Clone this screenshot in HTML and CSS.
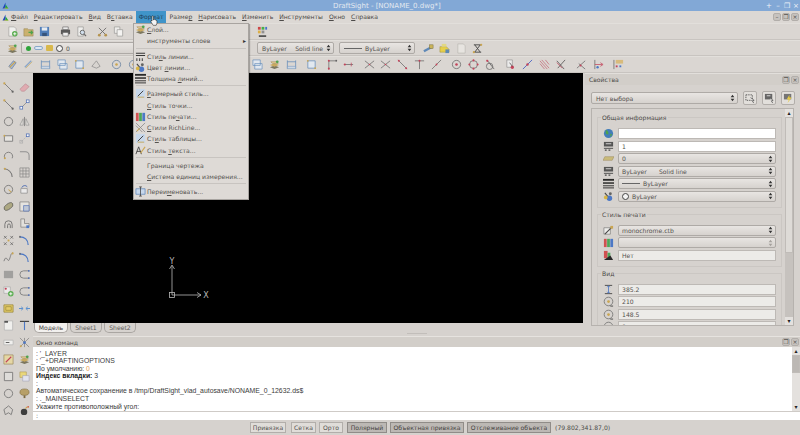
FILE: index.html
```html
<!DOCTYPE html>
<html lang="ru">
<head>
    <meta charset="UTF-8">
    <title>DraftSight - [NONAME_0.dwg*]</title>
    <link rel="stylesheet" href="styles.css">
</head>
<body>
<svg class="defs" xmlns="http://www.w3.org/2000/svg">
    <symbol id="logo" viewBox="0 0 12 12"><path d="M1 11 6 1v10z" fill="#1b3fc4"/><path d="M6 4l5 7H6z" fill="#18a83a"/><path d="M3 11h8v-1H3z" fill="#d8c020"/></symbol>
    <symbol id="new" viewBox="0 0 12 12"><path d="M2 1h6l2 2v8H2z" fill="#f4f4f2" stroke="#9a9a96" stroke-width=".7"/><circle cx="8.500" cy="8.500" r="3" fill="#49a83e"/><path d="M8.500 6.800v3.400M6.800 8.500h3.400" stroke="#fff"/></symbol>
    <symbol id="open" viewBox="0 0 12 12"><path d="M1 3h4l1 1h5v7H1z" fill="#c9ad62" stroke="#8f7a44" stroke-width=".6"/><path d="M6 7h4M8.500 5l2 2-2 2" stroke="#3d9c3a" fill="none" stroke-width="1.200"/></symbol>
    <symbol id="save" viewBox="0 0 12 12"><path d="M1 1h10v10H1z" fill="#3f73b5"/><path d="M3 1.500h6v3.500H3z" fill="#e8eef5"/><path d="M3.500 7.500h5V11h-5z" fill="#20416e"/></symbol>
    <symbol id="print" viewBox="0 0 12 12"><path d="M3 1h6v3H3z" fill="#eee" stroke="#444" stroke-width=".6"/><path d="M1 4h10v5H1z" fill="#4a4a4a"/><path d="M3 7h6v4H3z" fill="#f2f2f2" stroke="#444" stroke-width=".6"/></symbol>
    <symbol id="preview" viewBox="0 0 12 12"><path d="M2 1h6v10H2z" fill="#f2f2f0" stroke="#8a8a88" stroke-width=".7"/><circle cx="7" cy="7" r="2.400" fill="#cfe0f0" stroke="#555"/><path d="M9 9l2 2" stroke="#555" stroke-width="1.200"/></symbol>
    <symbol id="cut" viewBox="0 0 12 12"><path d="M2 2l7 7M10 2 3 9" stroke="#555" stroke-width=".9"/><circle cx="2.500" cy="10" r="1.500" fill="#b08a3c"/><circle cx="9.500" cy="10" r="1.500" fill="#b08a3c"/></symbol>
    <symbol id="copy" viewBox="0 0 12 12"><path d="M1.500 1h6v7h-6z" fill="#f0f0ee" stroke="#8a8a88" stroke-width=".7"/><path d="M4.500 4h6v7h-6z" fill="#f8f8f6" stroke="#8a8a88" stroke-width=".7"/></symbol>
    <symbol id="layer" viewBox="0 0 12 12"><path d="M1 9l5-2 5 2-5 2z" fill="#6f6a50"/><path d="M1 6.500l5-2 5 2-5 2z" fill="#c8a450"/><path d="M2 3h6l2 2H4z" fill="#e2c887" stroke="#8c7336" stroke-width=".5"/><circle cx="9" cy="3" r="1.500" fill="#3c9c3c"/></symbol>
    <symbol id="colorgrid" viewBox="0 0 12 12"><path d="M1 1h3v3H1z" fill="#c33"/><path d="M5 1h3v3H5z" fill="#3a3"/><path d="M9 1h2v3H9z" fill="#36c"/><path d="M1 5h3v3H1z" fill="#da3"/><path d="M5 5h3v3H5z" fill="#888"/><path d="M2 11h8" stroke="#222" stroke-width="1.600"/></symbol>
    <symbol id="measure" viewBox="0 0 12 12"><path d="M1 9 10 4" stroke="#4f7fb5" stroke-width="2.500"/><rect x="7" y="2" width="4" height="4" fill="#c8b04a" stroke="#665a20" stroke-width=".5"/></symbol>
    <symbol id="sheetlayer" viewBox="0 0 12 12"><path d="M1 4h7l3 3v3H1z" fill="#e8cf38" stroke="#8f8020" stroke-width=".5"/><path d="M3 1h5v3H3z" fill="#e4d978"/><path d="M7 7h4v4H7z" fill="#4c7fb0"/></symbol>
    <symbol id="page" viewBox="0 0 12 12"><path d="M2 1h6l2 2v8H2z" fill="#e9e7e2" stroke="#b5b3ae" stroke-width=".7"/></symbol>
    <symbol id="tape" viewBox="0 0 12 12"><path d="M2 2h8M2 10h8M3 2l6 8M9 2l-6 8" stroke="#333" fill="none"/><circle cx="2" cy="10" r="1.200" fill="#c9a040"/><circle cx="10" cy="2" r="1.200" fill="#c9a040"/></symbol>
    <symbol id="t-iso" viewBox="0 0 12 12"><path d="M2 8 7 2l3 2-5 7z" fill="#9db4d6" stroke="#3a5a8c" stroke-width=".6"/><path d="M3 9l6-6" stroke="#c9a040" stroke-width="1.200"/></symbol>
    <symbol id="t-dia" viewBox="0 0 12 12"><path d="M2 9 9 2" stroke="#7fa0c8" stroke-width="1.500"/><path d="M3 10 10 3" stroke="#c9a040" stroke-width=".7"/></symbol>
    <symbol id="t-lin" viewBox="0 0 12 12"><path d="M1.500 1.500v9M10.500 1.500v9M1.500 3h9" stroke="#4f7fb5" fill="none" stroke-width=".8"/><path d="M1.500 8h9v2.500h-9z" fill="#cbd8e8" stroke="#4f7fb5" stroke-width=".5"/></symbol>
    <symbol id="t-box" viewBox="0 0 12 12"><path d="M1 1h8v6H1zM3 5h8v6H3z" fill="#e4ebf4" stroke="#4f7fb5" stroke-width=".7"/></symbol>
    <symbol id="t-frame" viewBox="0 0 12 12"><path d="M2 2h8v8H2z" fill="#e4ebf4" stroke="#4f7fb5" stroke-width=".8"/><circle cx="2" cy="2" r="1" fill="#c9a040"/><circle cx="10" cy="10" r="1" fill="#c9a040"/></symbol>
    <symbol id="t-wedge" viewBox="0 0 12 12"><path d="M2 8 7 2l4 6-4 2z" fill="#d8d4d0" stroke="#777" stroke-width=".7"/></symbol>
    <symbol id="t-target" viewBox="0 0 12 12"><circle cx="6" cy="6" r="4.500" fill="none" stroke="#4f6f96" stroke-width=".8"/><circle cx="6" cy="6" r="1.400" fill="#c9a040"/></symbol>
    <symbol id="t-target-r" viewBox="0 0 12 12"><circle cx="6" cy="6" r="4.500" fill="none" stroke="#555" stroke-width=".8"/><circle cx="6" cy="6" r="1.400" fill="#c0304a"/></symbol>
    <symbol id="t-circ-r" viewBox="0 0 12 12"><circle cx="6" cy="6" r="4.300" fill="none" stroke="#555" stroke-width=".8"/><g fill="#c0304a"><circle cx="6" cy="1.500" r="1.100"/><circle cx="6" cy="10.500" r="1.100"/><circle cx="1.500" cy="6" r="1.100"/><circle cx="10.500" cy="6" r="1.100"/></g></symbol>
    <symbol id="t-tan" viewBox="0 0 12 12"><circle cx="5" cy="8" r="3.500" fill="none" stroke="#555" stroke-width=".8"/><path d="M2 1l8 10" stroke="#444" stroke-width=".8"/><circle cx="2.500" cy="2" r="1.200" fill="#c0304a"/></symbol>
    <symbol id="t-node" viewBox="0 0 12 12"><path d="M2 2v9M2 2h7" stroke="#555" fill="none" stroke-width=".8"/><circle cx="2" cy="2" r="1.100" fill="#c0304a"/><circle cx="10" cy="2" r="1.100" fill="#555"/><circle cx="2" cy="10.500" r="1.100" fill="#c0304a"/></symbol>
    <symbol id="t-dist" viewBox="0 0 12 12"><path d="M1 6h10" stroke="#555" stroke-width=".8"/><circle cx="2" cy="6" r="1.200" fill="#c0304a"/><path d="M9 4v4" stroke="#c0304a" stroke-width=".8"/></symbol>
    <symbol id="t-x" viewBox="0 0 12 12"><path d="M1 2l10 8M11 2 1 10" stroke="#555" stroke-width=".8"/><circle cx="6" cy="6" r=".9" fill="#c0304a"/></symbol>
    <symbol id="t-diag" viewBox="0 0 12 12"><path d="M1 1l10 10" stroke="#555" stroke-width=".8"/><circle cx="2" cy="2" r="1.100" fill="#c0304a"/><circle cx="10" cy="10" r="1.100" fill="#c0304a"/></symbol>
    <symbol id="t-tee" viewBox="0 0 12 12"><path d="M1 2h10M6 2v9" stroke="#555" stroke-width=".8"/><circle cx="6" cy="2" r="1.100" fill="#c0304a"/></symbol>
    <symbol id="t-rise" viewBox="0 0 12 12"><path d="M1 11 11 1" stroke="#555" stroke-width=".8"/><circle cx="6" cy="6" r="1" fill="#c0304a"/></symbol>
    <symbol id="t-snap" viewBox="0 0 12 12"><path d="M2 1h6v8H2z" fill="#eee" stroke="#777" stroke-width=".6"/><circle cx="8" cy="9" r="1.800" fill="#c0304a"/><path d="M5 4l3 4" stroke="#333" stroke-width=".8"/></symbol>
    <symbol id="t-blue" viewBox="0 0 12 12"><path d="M1 11 11 1" stroke="#3a56c4"/><circle cx="6" cy="6" r="1.300" fill="#c0304a"/></symbol>
    <symbol id="t-hatch" viewBox="0 0 12 12"><path d="M1 5l5 6M1 2l8 9M3 1l8 9M7 1l4 5" stroke="#c05a6a" stroke-width=".8"/></symbol>
    <symbol id="t-para" viewBox="0 0 12 12"><path d="M2 2l8 9M11 1 3 10" stroke="#333" stroke-width=".8"/><path d="M2 4l6 6" stroke="#c0304a" stroke-width=".8"/></symbol>
    <symbol id="t-ang" viewBox="0 0 12 12"><path d="M1 10 10 2M3 5l7 6" stroke="#555" stroke-width=".8"/><circle cx="5" cy="7" r="1.100" fill="#c0304a"/></symbol>
    <symbol id="t-perp" viewBox="0 0 12 12"><path d="M2 1v10" stroke="#555" stroke-width=".8"/><path d="M2 6h8M8 4l3 2-3 2" stroke="#c0304a" fill="none" stroke-width=".8"/><circle cx="5" cy="9" r="1.300" fill="#3a6cc4"/></symbol>
    <symbol id="t-snaps" viewBox="0 0 12 12"><path d="M1 1v10" stroke="#555" stroke-width=".8"/><path d="M3 1h8v4H3z" fill="#d8b870"/><g fill="#c0304a"><rect x="3" y="7" width="2" height="2"/></g><g fill="#3a6cc4"><rect x="7" y="7" width="2" height="2"/></g></symbol>
    <symbol id="d-line" viewBox="0 0 12 12"><path d="M1 1l10 10" stroke="#666" stroke-width=".9"/><circle cx="1.500" cy="1.500" r="1.200" fill="#c9a040"/><circle cx="10.500" cy="10.500" r="1.200" fill="#555"/></symbol>
    <symbol id="d-eraser" viewBox="0 0 12 12"><path d="M1 8 7 2l4 3-5 5H3z" fill="#e2a6ae" stroke="#b07880" stroke-width=".6"/></symbol>
    <symbol id="d-move" viewBox="0 0 12 12"><path d="M3 9l6-6" stroke="#777" stroke-width=".8"/><rect x="8" y="1" width="3" height="3" fill="#fff" stroke="#3a5fb0" stroke-width=".8"/><rect x="1" y="8" width="3" height="3" fill="#fff" stroke="#3a5fb0" stroke-width=".8"/></symbol>
    <symbol id="d-ring" viewBox="0 0 12 12"><circle cx="6" cy="6" r="4.500" fill="none" stroke="#666" stroke-width=".9"/></symbol>
    <symbol id="d-mirror" viewBox="0 0 12 12"><path d="M6 1v10" stroke="#666" stroke-width=".8"/><path d="M4.500 3v7H1zM7.500 3v7H11z" fill="#e4e2de" stroke="#888" stroke-width=".7"/></symbol>
    <symbol id="d-rect" viewBox="0 0 12 12"><path d="M1.500 3h9v6h-9z" fill="#e8e6e2" stroke="#666" stroke-width=".9"/><circle cx="1.500" cy="3" r="1" fill="#c9a040"/></symbol>
    <symbol id="d-off" viewBox="0 0 12 12"><path d="M2 10l7-7" stroke="#aaa" stroke-dasharray="1.500 1" stroke-width=".8"/><rect x="8" y="1" width="3" height="3" fill="#fff" stroke="#3a5fb0" stroke-width=".8"/><rect x="1" y="8" width="3" height="3" fill="none" stroke="#aaa" stroke-width=".8"/></symbol>
    <symbol id="d-arc" viewBox="0 0 12 12"><path d="M2 9a4.500 4.500 0 1 1 8 0" fill="none" stroke="#666" stroke-width=".9"/><circle cx="2" cy="9" r="1.100" fill="#c9a040"/></symbol>
    <symbol id="d-fillet" viewBox="0 0 12 12"><path d="M1 2h6a4 4 0 0 1 4 4v5" fill="none" stroke="#888" stroke-width="1.100"/></symbol>
    <symbol id="d-arc2" viewBox="0 0 12 12"><path d="M1 2c5 0 9 4 9 9" fill="none" stroke="#666" stroke-width="1.100"/><circle cx="2" cy="2" r="1.100" fill="#c9a040"/></symbol>
    <symbol id="d-grid" viewBox="0 0 12 12"><path d="M1 1h10v10H1zM1 4.300h10M1 7.600h10M4.300 1v10M7.600 1v10" fill="none" stroke="#777" stroke-width=".7"/></symbol>
    <symbol id="d-circ" viewBox="0 0 12 12"><circle cx="6" cy="6" r="4.500" fill="none" stroke="#666" stroke-width=".9"/><path d="M6 6l3 3" stroke="#c9a040" stroke-width="1.100"/></symbol>
    <symbol id="d-rot" viewBox="0 0 12 12"><path d="M2 5h7v5H2z" fill="#eee" stroke="#777" stroke-width=".7"/><path d="M3 4a3.500 3.500 0 0 1 6-1" stroke="#3a5fb0" fill="none"/></symbol>
    <symbol id="d-ell" viewBox="0 0 12 12"><ellipse cx="6" cy="6" rx="5.500" ry="3" transform="rotate(-35 6 6)" fill="#a8a378" stroke="#444" stroke-width=".7"/></symbol>
    <symbol id="d-scale" viewBox="0 0 12 12"><path d="M1 1h10v10H1z" fill="#e8e6e2" stroke="#777" stroke-width=".8"/><path d="M5 5h6v6H5z" fill="#bcc6d6" stroke="#3a5fb0" stroke-width=".7"/></symbol>
    <symbol id="d-spiral" viewBox="0 0 12 12"><path d="M2 11V7a4 4 0 0 1 8 0v4M5 11V8a1.500 1.500 0 0 1 3 0v3" fill="none" stroke="#666"/></symbol>
    <symbol id="d-stretch" viewBox="0 0 12 12"><path d="M2 1v9h9V6H6V1z" fill="#e4e2de" stroke="#777" stroke-width=".8"/><rect x="8" y="8" width="3" height="3" fill="#3a6cc4"/></symbol>
    <symbol id="d-pts" viewBox="0 0 12 12"><g stroke="#555" stroke-width=".8"><path d="M1 1l3 3M4 1 1 4M8 1l3 3M11 1 8 4M1 8l3 3M4 8l-3 3M8 8l3 3M11 8l-3 3"/></g><path d="M5 5h2v2H5z" fill="#c9a040"/></symbol>
    <symbol id="d-arcb" viewBox="0 0 12 12"><path d="M1 2c5 0 9 3 9 9" fill="none" stroke="#3a6cc4" stroke-width="1.300"/><path d="M1 1v2" stroke="#222"/></symbol>
    <symbol id="d-spline" viewBox="0 0 12 12"><path d="M1 10c3-9 4 3 6-2s1-6 4-7" fill="none" stroke="#666" stroke-width=".9"/><circle cx="10.500" cy="1.500" r="1.100" fill="#c9a040"/></symbol>
    <symbol id="d-fill" viewBox="0 0 12 12"><path d="M1 2h10v8H1z" fill="#9a9a98"/></symbol>
    <symbol id="d-round" viewBox="0 0 12 12"><path d="M11 2H5a3.500 3.500 0 0 0 0 8h6" fill="none" stroke="#777"/><path d="M10 1h1.500v2H10zM10 9h1.500v2H10z" fill="#3a5fb0"/></symbol>
    <symbol id="d-add" viewBox="0 0 12 12"><path d="M1 1h7v7H1z" fill="#eee" stroke="#999" stroke-width=".6"/><circle cx="3" cy="3" r="1.200" fill="#c0304a"/><circle cx="8.500" cy="8.500" r="3" fill="#49a83e"/><path d="M8.500 6.800v3.400M6.800 8.500h3.400" stroke="#fff"/></symbol>
    <symbol id="d-yrect" viewBox="0 0 12 12"><path d="M1 2h10v8H1z" fill="#e6cb5a" stroke="#8f7a24" stroke-width=".8"/><path d="M3 4h6v4H3z" fill="none" stroke="#8f7a24" stroke-width=".7"/></symbol>
    <symbol id="d-arrows" viewBox="0 0 12 12"><path d="M0 6h4M2.500 4.200 4.500 6l-2 1.800M12 6H8M9.500 4.200 7.500 6l2 1.800" stroke="#3a7fd0" fill="none"/></symbol>
    <symbol id="d-wpage" viewBox="0 0 12 12"><path d="M1.500 1h9v10h-9z" fill="#f4f4f2" stroke="#aaa" stroke-width=".7"/><path d="M1.500 1h4v2h-4z" fill="#444"/></symbol>
    <symbol id="d-tee" viewBox="0 0 12 12"><path d="M1 1.500h10" stroke="#222" stroke-width="1.200"/><path d="M6 2v9" stroke="#3a6cc4" stroke-width="1.200"/></symbol>
    <symbol id="d-tag" viewBox="0 0 12 12"><path d="M1 3.500h10v5H1z" fill="#f4f4f2" stroke="#aaa" stroke-width=".7"/><path d="M3 6h4" stroke="#444"/></symbol>
    <symbol id="d-expl" viewBox="0 0 12 12"><path d="M1 1l10 10M11 1 1 11M6 1v10" stroke="#777" stroke-width=".8"/><circle cx="6" cy="6" r="1.500" fill="#3a6cc4"/><circle cx="2" cy="10" r="1.100" fill="#c9a040"/></symbol>
    <symbol id="d-pencil" viewBox="0 0 12 12"><path d="M1 1h10v10H1z" fill="#e8d8a0" stroke="#8f7a44" stroke-width=".7"/><path d="M3 9l6-6" stroke="#c0304a" stroke-width="1.200"/></symbol>
    <symbol id="d-outline" viewBox="0 0 12 12"><path d="M1.500 1.500h9v9h-9z" fill="#e0dedb" stroke="#666" stroke-width=".9"/></symbol>
    <symbol id="d-ycopy" viewBox="0 0 12 12"><path d="M1 1h7v6H1z" fill="#ecd870" stroke="#a89040" stroke-width=".6"/><path d="M4 5h7v6H4z" fill="#e4e6f2" stroke="#9a9ab0" stroke-width=".6"/></symbol>
    <symbol id="d-tree" viewBox="0 0 12 12"><ellipse cx="6" cy="4.500" rx="5" ry="3.500" fill="#b39a5a" stroke="#6f5c2c" stroke-width=".6"/><path d="M5 8h2v3H5z" fill="#6f5c2c"/></symbol>
    <symbol id="d-star" viewBox="0 0 12 12"><path d="M6 1l4.500 4-1.500 5.500-3-2-3.500 2L1 5z" fill="none" stroke="#666" stroke-width=".9"/></symbol>
    <symbol id="d-bomb" viewBox="0 0 12 12"><circle cx="5.500" cy="7.500" r="3.500" fill="#2a2a2a"/><path d="M7 4l2-2" stroke="#c9a040" stroke-width="1.200"/><circle cx="10" cy="2" r="1" fill="#d05030"/></symbol>
    <symbol id="m-style" viewBox="0 0 12 12"><path d="M1 2.500h10M1 5h10" stroke="#222" stroke-width="1.100"/><path d="M2 8v3M5 8v3M8 8v3" stroke="#444" stroke-width="1.300"/></symbol>
    <symbol id="m-color" viewBox="0 0 12 12"><path d="M2 2l5 6" stroke="#333" stroke-width="1.200"/><circle cx="7" cy="8" r="3" fill="#3a6cc4"/><circle cx="3" cy="7" r="2" fill="#d8b030"/><circle cx="8" cy="3" r="1.600" fill="#555"/></symbol>
    <symbol id="m-weight" viewBox="0 0 12 12"><path d="M0 2h12" stroke="#111" stroke-width="2"/><path d="M0 5.500h12" stroke="#111" stroke-width="1.600"/><path d="M0 8.500h12M0 10.800h12" stroke="#111"/></symbol>
    <symbol id="m-dim" viewBox="0 0 12 12"><path d="M1 1h10v10H1z" fill="#c6d8ee"/><path d="M3 9l6-6" stroke="#222"/><path d="M3 10h7" stroke="#c9a040"/></symbol>
    <symbol id="m-print" viewBox="0 0 12 12"><path d="M1 2h3v9H1z" fill="#d04040"/><path d="M4.500 2h3v9h-3z" fill="#3aa04a"/><path d="M8 2h3v9H8z" fill="#3a6cc4"/></symbol>
    <symbol id="m-rich" viewBox="0 0 12 12"><path d="M1 1l10 10M11 1 1 11M1 4l7 7" stroke="#777" stroke-width=".8"/><path d="M2 10l3-3" stroke="#c9a040" stroke-width="1.100"/></symbol>
    <symbol id="m-text" viewBox="0 0 12 12"><path d="M1 10 4 2l3 8M2 7h4" stroke="#222" fill="none" stroke-width=".9"/><path d="M6 9l5-7" stroke="#c9a040" stroke-width="1.200"/></symbol>
    <symbol id="m-rename" viewBox="0 0 12 12"><path d="M1 3h10v6H1z" fill="#c6d8ee" stroke="#3a6cb0" stroke-width=".7"/><path d="M6 1v10M4.500 1h3M4.500 11h3" stroke="#222" stroke-width=".8"/></symbol>
    <symbol id="p-globe" viewBox="0 0 12 12"><circle cx="6" cy="6" r="5" fill="#2f72b8"/><path d="M3 2c2 1 3 2 3 4S4 7 3 6zM8 6l2 1-2 3z" fill="#3c9c3c"/></symbol>
    <symbol id="p-link" viewBox="0 0 12 12"><path d="M1 1h10v5H1z" fill="#444"/><path d="M3 3h6" stroke="#ddd"/><path d="M1 8h10" stroke="#333"/><path d="M2 10h2M6 10h2" stroke="#333" stroke-width="1.400"/></symbol>
    <symbol id="p-layer" viewBox="0 0 12 12"><path d="M0 8l2-4h10l-2 4z" fill="#c8b870" stroke="#8f7a44" stroke-width=".5"/></symbol>
    <symbol id="p-pstyle" viewBox="0 0 12 12"><path d="M1 3h7v7H1z" fill="#f0f0ee" stroke="#555" stroke-width=".6"/><path d="M2 10 10 2" stroke="#333" stroke-width="1.200"/><path d="M8 1h3v3H8z" fill="#c9a040"/></symbol>
    <symbol id="p-net" viewBox="0 0 12 12"><path d="M1 1h4v8H1z" fill="#d04040"/><path d="M5 3h3v7H5z" fill="#3aa04a"/><path d="M1 11h10L8 6z" fill="#111"/></symbol>
    <symbol id="p-height" viewBox="0 0 12 12"><path d="M2 1.500h8M2 10.500h8" stroke="#222" stroke-width=".9"/><path d="M6 2v8M4.500 3.500 6 2l1.500 1.500M4.500 8.500 6 10l1.500-1.500" stroke="#3a6cc4" fill="none" stroke-width=".9"/></symbol>
    <symbol id="p-center" viewBox="0 0 12 12"><circle cx="6" cy="6" r="4.700" fill="none" stroke="#666" stroke-width=".9"/><circle cx="6" cy="6" r="1.500" fill="#c9a040"/><path d="M8 11h3" stroke="#333"/></symbol>
    <symbol id="sel1" viewBox="0 0 12 12"><path d="M1 2h7v6H1z" fill="none" stroke="#444" stroke-dasharray="1.500 1"/><path d="M6 5l4 3-2 .5 1.500 2.500" fill="#fff" stroke="#222" stroke-width=".7"/></symbol>
    <symbol id="sel2" viewBox="0 0 12 12"><path d="M1 1h8v6H1z" fill="#555"/><path d="M3 3h4" stroke="#ddd"/><path d="M6 5l4 3-2 .5 1.500 2.500" fill="#fff" stroke="#222" stroke-width=".7"/></symbol>
    <symbol id="sel3" viewBox="0 0 12 12"><path d="M1 1h8v6H1z" fill="#666"/><path d="M7 2 4 7h2.500L5 11l4.500-6H7z" fill="#e8c830"/></symbol>
    <symbol id="spin" viewBox="0 0 6 10"><path d="M3 1 5.300 4H.7zM3 9 .7 6h4.600z" fill="currentColor"/></symbol>
</svg>

<div class="app">
    <div class="titlebar">
        <svg class="logo"><use href="#logo"/></svg>
        <span class="title-text">DraftSight - [NONAME_0.dwg*]</span>
        <div class="wm-buttons"><span>+</span><span>–</span><span>❐</span><span>×</span></div>
    </div>

    <div class="menubar">
        <svg class="logo"><use href="#logo"/></svg>
        <span class="mi mi-first"><u>Ф</u>айл</span>
        <span class="mi"><u>Р</u>едактировать</span>
        <span class="mi"><u>В</u>ид</span>
        <span class="mi">В<u>с</u>тавка</span>
        <span class="mi mi-active">Фор<u>м</u>ат</span>
        <span class="mi">Разме<u>р</u></span>
        <span class="mi"><u>Н</u>арисовать</span>
        <span class="mi"><u>И</u>зменить</span>
        <span class="mi"><u>И</u>нструменты</span>
        <span class="mi"><u>О</u>кно</span>
        <span class="mi"><u>С</u>правка</span>
        <div class="mdi-buttons"><span>–</span><span>❐</span><span>×</span></div>
    </div>

    <div class="toolbar tb-one">
        <svg class="ic"><use href="#new"/></svg>
        <svg class="ic"><use href="#open"/></svg>
        <svg class="ic"><use href="#save"/></svg>
        <svg class="ic sep"><use href="#print"/></svg>
        <svg class="ic"><use href="#preview"/></svg>
        <svg class="ic sep"><use href="#cut"/></svg>
        <svg class="ic"><use href="#copy"/></svg>
        <svg class="ic tb-color"><use href="#colorgrid"/></svg>
    </div>

    <div class="toolbar tb-two">
        <svg class="ic"><use href="#layer"/></svg>
        <div class="combo combo-layer">
            <span class="dot"></span><span class="pill"></span><span class="lock"></span><span class="ring"></span><span>0</span>
        </div>
        <div class="combo combo-line"><span class="grow">ByLayer</span><span>Solid line</span><svg class="spin"><use href="#spin"/></svg></div>
        <div class="combo combo-weight"><span class="dash"></span><span class="grow">ByLayer</span><svg class="spin"><use href="#spin"/></svg></div>
        <div class="tb-end">
            <svg class="ic"><use href="#measure"/></svg>
            <svg class="ic"><use href="#sheetlayer"/></svg>
            <svg class="ic"><use href="#page"/></svg>
            <svg class="ic"><use href="#tape"/></svg>
        </div>
    </div>

    <div class="toolbar tb-three">
        <svg class="ic"><use href="#t-iso"/></svg>
        <svg class="ic"><use href="#t-dia"/></svg>
        <svg class="ic"><use href="#t-lin"/></svg>
        <svg class="ic"><use href="#t-box"/></svg>
        <svg class="ic"><use href="#t-frame"/></svg>
        <svg class="ic"><use href="#t-wedge"/></svg>
        <svg class="ic sep"><use href="#t-target"/></svg>
        <svg class="ic"><use href="#t-target"/></svg>
        <svg class="ic tb-after-menu"><use href="#t-box"/></svg>
        <svg class="ic"><use href="#layer"/></svg>
        <svg class="ic"><use href="#t-lin"/></svg>
        <svg class="ic sep"><use href="#t-frame"/></svg>
        <svg class="ic sep"><use href="#t-node"/></svg>
        <svg class="ic"><use href="#t-dist"/></svg>
        <svg class="ic sep"><use href="#t-x"/></svg>
        <svg class="ic"><use href="#t-x"/></svg>
        <svg class="ic"><use href="#t-diag"/></svg>
        <svg class="ic"><use href="#t-tee"/></svg>
        <svg class="ic"><use href="#t-rise"/></svg>
        <svg class="ic sep"><use href="#t-target-r"/></svg>
        <svg class="ic"><use href="#t-circ-r"/></svg>
        <svg class="ic"><use href="#t-tan"/></svg>
        <svg class="ic sep"><use href="#t-snap"/></svg>
        <svg class="ic"><use href="#t-blue"/></svg>
        <svg class="ic"><use href="#t-hatch"/></svg>
        <svg class="ic"><use href="#t-para"/></svg>
        <svg class="ic sep"><use href="#t-ang"/></svg>
        <svg class="ic"><use href="#t-perp"/></svg>
        <svg class="ic sep"><use href="#t-snaps"/></svg>
    </div>

    <div class="workspace">
        <div class="dock-left">
            <svg class="ic"><use href="#d-line"/></svg><svg class="ic"><use href="#d-eraser"/></svg>
            <svg class="ic"><use href="#d-line"/></svg><svg class="ic"><use href="#d-move"/></svg>
            <svg class="ic"><use href="#d-ring"/></svg><svg class="ic"><use href="#d-mirror"/></svg>
            <svg class="ic"><use href="#d-rect"/></svg><svg class="ic"><use href="#d-off"/></svg>
            <svg class="ic"><use href="#d-arc"/></svg><svg class="ic"><use href="#d-fillet"/></svg>
            <svg class="ic"><use href="#d-arc2"/></svg><svg class="ic"><use href="#d-grid"/></svg>
            <svg class="ic"><use href="#d-circ"/></svg><svg class="ic"><use href="#d-rot"/></svg>
            <svg class="ic"><use href="#d-ell"/></svg><svg class="ic"><use href="#d-scale"/></svg>
            <svg class="ic"><use href="#d-spiral"/></svg><svg class="ic"><use href="#d-stretch"/></svg>
            <svg class="ic"><use href="#d-pts"/></svg><svg class="ic"><use href="#d-arcb"/></svg>
            <svg class="ic"><use href="#d-spline"/></svg><svg class="ic"><use href="#d-arcb"/></svg>
            <svg class="ic"><use href="#d-fill"/></svg><svg class="ic"><use href="#d-round"/></svg>
            <svg class="ic"><use href="#d-add"/></svg><svg class="ic"><use href="#d-round"/></svg>
            <svg class="ic"><use href="#d-yrect"/></svg><svg class="ic"><use href="#d-arrows"/></svg>
            <svg class="ic"><use href="#d-wpage"/></svg><svg class="ic"><use href="#d-tee"/></svg>
            <svg class="ic"><use href="#d-tag"/></svg><svg class="ic"><use href="#d-expl"/></svg>
            <svg class="ic"><use href="#d-pencil"/></svg><svg class="ic"><use href="#layer"/></svg>
            <svg class="ic"><use href="#d-outline"/></svg><svg class="ic"><use href="#d-ycopy"/></svg>
            <svg class="ic"><use href="#d-ring"/></svg><svg class="ic"><use href="#d-tree"/></svg>
            <svg class="ic"><use href="#d-star"/></svg><svg class="ic"><use href="#d-bomb"/></svg>
        </div>

        <div class="center">
            <div class="upper">
                <div class="drawing">
                    <div class="canvas">
                        <svg class="axes" viewBox="0 0 50 50">
                            <path d="M10 38V9M7.500 12 10 8l2.500 4M10 38h29M35 35.500l4 2.500-4 2.500" fill="none" stroke="#b8b8b8" stroke-width=".8"/>
                            <rect x="7.500" y="35.500" width="5" height="5" fill="none" stroke="#b8b8b8" stroke-width=".8"/>
                            <text x="10" y="7" class="axis-label">Y</text>
                            <text x="44" y="41" class="axis-label">X</text>
                        </svg>
                    </div>
                    <div class="tabs">
                        <span class="tab tab-active">Модель</span>
                        <span class="tab">Sheet1</span>
                        <span class="tab">Sheet2</span>
                    </div>
                </div>

                <div class="props">
                    <div class="dock-head">
                        <span>Свойства</span>
                        <div class="dock-buttons"><span>❐</span><span>×</span></div>
                    </div>
                    <div class="select-row">
                        <div class="combo combo-sel"><span class="grow">Нет выбора</span><svg class="spin"><use href="#spin"/></svg></div>
                        <span class="sel-btn"><svg class="ic"><use href="#sel1"/></svg></span>
                        <span class="sel-btn"><svg class="ic"><use href="#sel2"/></svg></span>
                        <span class="sel-btn"><svg class="ic"><use href="#sel3"/></svg></span>
                    </div>
                    <div class="props-frame">
                        <div class="props-scroll">
                            <fieldset class="group">
                                <legend>Общая информация</legend>
                                <div class="rows">
                                    <svg class="ic"><use href="#p-globe"/></svg><div class="field field-white"></div>
                                    <svg class="ic"><use href="#p-link"/></svg><div class="field field-white">1</div>
                                    <svg class="ic"><use href="#p-layer"/></svg><div class="combo combo-row"><span class="grow">0</span><svg class="spin"><use href="#spin"/></svg></div>
                                    <svg class="ic"><use href="#p-link"/></svg><div class="combo combo-row"><span class="row-name">ByLayer</span><span class="grow">Solid line</span><svg class="spin"><use href="#spin"/></svg></div>
                                    <svg class="ic"><use href="#m-weight"/></svg><div class="combo combo-row"><span class="dash"></span><span class="grow">ByLayer</span><svg class="spin"><use href="#spin"/></svg></div>
                                    <svg class="ic"><use href="#m-color"/></svg><div class="combo combo-row"><span class="ring"></span><span class="grow">ByLayer</span><svg class="spin"><use href="#spin"/></svg></div>
                                </div>
                            </fieldset>
                            <fieldset class="group">
                                <legend>Стиль печати</legend>
                                <div class="rows">
                                    <svg class="ic"><use href="#p-pstyle"/></svg><div class="combo combo-row"><span class="grow">monochrome.ctb</span><svg class="spin"><use href="#spin"/></svg></div>
                                    <svg class="ic"><use href="#m-print"/></svg><div class="combo combo-row combo-off"><span class="grow"></span><svg class="spin"><use href="#spin"/></svg></div>
                                    <svg class="ic"><use href="#p-net"/></svg><div class="field">Нет</div>
                                </div>
                            </fieldset>
                            <fieldset class="group">
                                <legend>Вид</legend>
                                <div class="rows">
                                    <svg class="ic"><use href="#p-height"/></svg><div class="field">385.2</div>
                                    <svg class="ic"><use href="#p-center"/></svg><div class="field">210</div>
                                    <svg class="ic"><use href="#p-center"/></svg><div class="field">148.5</div>
                                    <svg class="ic"><use href="#p-center"/></svg><div class="field">0</div>
                                </div>
                            </fieldset>
                        </div>
                        <div class="vscroll vscroll-props">
                            <span class="arrow">▴</span><span class="thumb"></span><span class="trough"></span><span class="arrow">▾</span>
                        </div>
                    </div>
                </div>
            </div>

            <div class="splitter"><span class="grip"></span></div>

            <div class="command">
                <div class="dock-head cmd-head">
                    <span>Окно команд</span>
                    <div class="dock-buttons"><span>❐</span><span>×</span></div>
                </div>
                <div class="cmd-body">
                    <div class="cmd-log">
                        <div>: '_LAYER</div>
                        <div>: '_+DRAFTINGOPTIONS</div>
                        <div>По умолчанию: <span class="cmd-val">0</span></div>
                        <div><b>Индекс вкладки:</b> 3</div>
                        <div>:</div>
                        <div>Автоматическое сохранение в /tmp/DraftSight_vlad_autosave/NONAME_0_12632.ds$</div>
                        <div>: ._MAINSELECT</div>
                        <div>Укажите противоположный угол:</div>
                    </div>
                    <div class="vscroll vscroll-cmd">
                        <span class="arrow">▴</span><span class="thumb"></span><span class="trough trough-light"></span><span class="arrow">▾</span>
                    </div>
                </div>
                <div class="cmd-input">:</div>
                <div class="statusbar">
                    <span class="st st-snapto">Привязка</span>
                    <span class="st st-grid">Сетка</span>
                    <span class="st st-orto">Орто</span>
                    <span class="st st-on st-polar">Полярный</span>
                    <span class="st st-on st-osnap">Объектная привязка</span>
                    <span class="st st-on st-track">Отслеживание объекта</span>
                    <span class="coords">(79.802,341.87,0)</span>
                </div>
            </div>
        </div>
    </div>

    <div class="menu">
        <div class="menu-item"><svg class="ic"><use href="#layer"/></svg><span><u>С</u>лой...</span></div>
        <div class="menu-item menu-sub"><i></i><span>инструменты слоев</span><b>▸</b></div>
        <div class="menu-sep"></div>
        <div class="menu-item"><svg class="ic"><use href="#m-style"/></svg><span>Сти<u>л</u>ь линии...</span></div>
        <div class="menu-item"><svg class="ic"><use href="#m-color"/></svg><span>Цвет <u>л</u>инии...</span></div>
        <div class="menu-item"><svg class="ic"><use href="#m-weight"/></svg><span>Толщина <u>л</u>иний...</span></div>
        <div class="menu-sep"></div>
        <div class="menu-item"><svg class="ic"><use href="#m-dim"/></svg><span><u>Р</u>азмерный стиль...</span></div>
        <div class="menu-item"><i></i><span><u>С</u>тиль точки...</span></div>
        <div class="menu-item"><svg class="ic"><use href="#m-print"/></svg><span>Стиль пе<u>ч</u>ати...</span></div>
        <div class="menu-item"><svg class="ic"><use href="#m-rich"/></svg><span><u>С</u>тили RichLine...</span></div>
        <div class="menu-item"><svg class="ic"><use href="#m-dim"/></svg><span>Ст<u>и</u>ль таблицы...</span></div>
        <div class="menu-item"><svg class="ic"><use href="#m-text"/></svg><span>Стиль <u>т</u>екста...</span></div>
        <div class="menu-sep"></div>
        <div class="menu-item"><i></i><span>Граница чертежа</span></div>
        <div class="menu-item"><i></i><span><u>С</u>истема единиц измерения...</span></div>
        <div class="menu-sep"></div>
        <div class="menu-item"><svg class="ic"><use href="#m-rename"/></svg><span>Переи<u>м</u>еновать...</span></div>
    </div>

    <svg class="cursor" viewBox="0 0 10 13"><path d="M2.500 1.500c0-1.200 1.800-1.200 1.800 0V6l.5-1c1-.4 1.400.2 1.400.7.700-.4 1.300 0 1.300.6.700-.2 1.200.2 1.200.9V10l-1 2.500H4L1 8c-.6-1 .6-1.700 1.500-.8z" fill="#f4f4f4" stroke="#222" stroke-width=".7"/></svg>
</div>
</body>
</html>
```

FILE: styles.css
```css
* {
    box-sizing: border-box;
}

body {
    margin: 0;
    background: #d6d2ce;
    font-family: "DejaVu Sans", sans-serif;
    font-size: 6.1px;
    color: #4c4a48;
}

.defs {
    display: none;
}

.app {
    position: relative;
    width: 800px;
    height: 435px;
    display: flex;
    flex-direction: column;
    overflow: hidden;
    background: #d6d2ce;
}

.ic {
    width: 11px;
    height: 11px;
    flex: none;
    display: block;
    opacity: 0.88;
}

.grow {
    flex: 1;
}

/* title and menu */
.titlebar {
    height: 11px;
    flex: none;
    background: #82a8d6;
    display: flex;
    align-items: center;
    padding-left: 2px;
    font-size: 7px;
    color: #e2e8f0;
}

.logo {
    width: 7px;
    height: 7px;
    flex: none;
}

.title-text {
    margin-left: 324px;
}

.wm-buttons {
    margin-left: auto;
    display: flex;
    gap: 3px;
    padding-right: 1px;
    color: #f0f3f8;
    font-size: 7px;
}

.wm-buttons span {
    width: 6px;
    text-align: center;
}

.menubar {
    height: 12px;
    flex: none;
    display: flex;
    align-items: center;
    padding-left: 2px;
    background: #dcd8d4;
}

.mi {
    height: 100%;
    line-height: 12px;
    padding: 0 3px;
}

.mi-first {
    margin-left: -1px;
}

.mi-active {
    background: #3f94c9;
    color: #1f3f58;
}

.mdi-buttons {
    margin-left: auto;
    display: flex;
    gap: 1px;
    padding-right: 1px;
}

.mdi-buttons span,
.dock-buttons span {
    width: 8px;
    height: 8px;
    border: 1px solid #b2aeaa;
    border-radius: 2px;
    background: #c6c2be;
    font-size: 6px;
    line-height: 6px;
    text-align: center;
    color: #55524f;
}

.toolbar {
    flex: none;
    display: flex;
    align-items: center;
    padding-left: 7px;
    border-top: 1px solid #e2dfdb;
    border-bottom: 1px solid #c8c4c0;
    background: #dad6d2;
}

.tb-one {
    height: 17px;
    gap: 5px;
}

.tb-one .sep {
    margin-left: 5px;
}

.tb-color {
    margin-left: 128px;
}

.tb-two {
    height: 16px;
}

.tb-three {
    height: 17px;
    gap: 5.800px;
    padding-left: 6.500px;
}

.tb-three .sep {
    margin-left: 3.500px;
}

.tb-three .tb-after-menu {
    margin-left: 108px;
}

.combo {
    height: 12px;
    display: flex;
    align-items: center;
    gap: 3px;
    padding: 0 2px 0 4px;
    border: 1px solid #aeaaa6;
    border-radius: 2px;
    background: linear-gradient(180deg, #e8e5e2, #d6d2ce);
    white-space: nowrap;
    color: #55524f;
}

.spin {
    width: 5px;
    height: 8px;
    flex: none;
    color: #333;
}

.combo-layer {
    width: 226px;
    margin-left: 3px;
}

.combo-line {
    width: 77px;
    margin-left: 10px;
}

.combo-weight {
    width: 76px;
    margin-left: 5px;
}

.tb-end {
    display: flex;
    gap: 5.300px;
    margin-left: 8px;
}

.dot {
    width: 5px;
    height: 5px;
    border-radius: 50%;
    background: #2fa43a;
}

.pill {
    width: 9px;
    height: 4px;
    border-radius: 2px;
    background: #dbe8f4;
    border: 1px solid #8aa8c8;
}

.lock {
    width: 7px;
    height: 6px;
    border-radius: 1px;
    background: #d8b84c;
}

.ring {
    width: 7px;
    height: 7px;
    flex: none;
    border-radius: 50%;
    border: 1px solid #444;
    background: #f4f4f4;
}

.dash {
    width: 18px;
    flex: none;
    border-top: 1px solid #666;
}

/* workspace */
.workspace {
    flex: 1;
    display: flex;
    min-height: 0;
}

.dock-left {
    width: 33px;
    flex: none;
    display: grid;
    grid-template-columns: 16px 16px;
    grid-auto-rows: 17px;
    align-content: start;
    justify-items: center;
    align-items: center;
    padding-top: 5.500px;
}

.center {
    flex: 1;
    min-width: 0;
    display: flex;
    flex-direction: column;
}

.upper {
    height: 260px;
    flex: none;
    display: flex;
}

.drawing {
    width: 550px;
    flex: none;
    display: flex;
    flex-direction: column;
}

.canvas {
    position: relative;
    height: 250px;
    flex: none;
    background: #000;
}

.axes {
    position: absolute;
    left: 129px;
    top: 184px;
    width: 50px;
    height: 50px;
}

.axis-label {
    font-size: 8px;
    fill: #b8b8b8;
    text-anchor: middle;
}

.tabs {
    height: 10px;
    flex: none;
    display: flex;
    gap: 2px;
    padding-left: 1px;
}

.tab {
    width: 32px;
    height: 10px;
    line-height: 9px;
    text-align: center;
    border: 1px solid #aaa6a2;
    border-top: none;
    border-radius: 0 0 5px 5px;
    color: #5c5956;
}

.tab-active {
    width: 34px;
    background: #f2f0ee;
    color: #44423f;
}

.props {
    margin-left: 2px;
    flex: 1;
    min-width: 0;
    display: flex;
    flex-direction: column;
}

.dock-head {
    height: 12px;
    flex: none;
    display: flex;
    align-items: center;
    padding: 0 1px 0 4px;
    background: #d2cec9;
    border-top: 1px solid #e2dfdb;
}

.dock-buttons {
    margin-left: auto;
    display: flex;
    gap: 1px;
}

.select-row {
    height: 23px;
    flex: none;
    display: flex;
    align-items: center;
    padding: 3px 5px 0 6px;
}

.combo-sel {
    width: 147px;
    margin-right: 5px;
}

.sel-btn {
    width: 14px;
    height: 14px;
    margin-right: 5px;
    display: flex;
    align-items: center;
    justify-content: center;
    border: 1px solid #b2aeaa;
    border-radius: 2px;
    background: #e2dfdb;
}

.sel-btn:last-child {
    margin-right: 0;
}

.props-frame {
    height: 218px;
    flex: none;
    margin: 0 6px;
    display: flex;
    border: 1px solid #b6b2ae;
    overflow: hidden;
}

.props-scroll {
    flex: 1;
    min-width: 0;
    padding: 4px 3px 0 5px;
    overflow: hidden;
}

.group {
    margin: 0 0 2px;
    padding: 6px 5px 5px 0;
    border: 1px solid #cbc7c3;
    min-width: 0;
}

.group legend {
    margin-left: 3px;
    padding: 0 1px;
    line-height: 9px;
}

.rows {
    display: grid;
    grid-template-columns: 20px 1fr;
    row-gap: 1.500px;
    align-items: center;
    justify-items: center;
}

.rows .field,
.rows .combo {
    justify-self: stretch;
}

.field {
    height: 11px;
    line-height: 9px;
    padding: 0 3px;
    border: 1px solid #bdb9b5;
    background: #ecebe8;
    color: #55524f;
}

.field-white {
    background: #fff;
}

.combo-row {
    height: 11px;
    padding-left: 3px;
}

.row-name {
    width: 34px;
}

.combo-off .spin {
    color: #a5a19d;
}

.vscroll {
    width: 8px;
    flex: none;
    display: flex;
    flex-direction: column;
    background: #c6c2be;
}

.arrow {
    height: 8px;
    flex: none;
    background: #e4e1de;
    font-size: 6px;
    line-height: 8px;
    text-align: center;
    color: #222;
}

.thumb {
    flex: none;
    background: #dedbd7;
    border: 1px solid #c0bcb8;
}

.trough {
    flex: 1;
}

.vscroll-props .thumb {
    height: 136px;
}

.vscroll-cmd {
    background: #e4e1de;
}

.vscroll-cmd .thumb {
    height: 18px;
    background: #bcb8b4;
}

.trough-light {
    background: #e4e1de;
}

.splitter {
    height: 3px;
    flex: none;
    display: flex;
    justify-content: center;
}

.grip {
    width: 20px;
    height: 1px;
    background: #c2beba;
}

.command {
    flex: 1;
    min-height: 0;
    display: flex;
    flex-direction: column;
}

.cmd-head {
    height: 11px;
    padding-left: 3px;
    border-top: 1px solid #e6e3df;
}

.cmd-body {
    height: 65px;
    flex: none;
    display: flex;
    background: #fff;
    border-bottom: 1px solid #cfcbc7;
}

.cmd-log {
    flex: 1;
    padding: 2.500px 0 0 3px;
    overflow: hidden;
    font-family: "Liberation Sans", sans-serif;
    font-size: 6.850px;
    line-height: 7.600px;
    color: #3a3a3a;
}

.cmd-log b {
    color: #1c1c1c;
}

.cmd-val {
    color: #e8a050;
}

.cmd-input {
    height: 8px;
    flex: none;
    padding-left: 3px;
    line-height: 7px;
    background: #fff;
}

.statusbar {
    flex: 1;
    display: flex;
    align-items: center;
    padding-left: 217px;
}

.st {
    height: 11px;
    line-height: 9px;
    text-align: center;
    border: 1px solid #b2aeaa;
    background: #e0ddd9;
    white-space: nowrap;
    color: #55524f;
}

.st-snapto {
    width: 36px;
    margin-right: 5px;
}

.st-grid {
    width: 25px;
    margin-right: 3px;
}

.st-orto {
    width: 24px;
    margin-right: 4px;
}

.st-on {
    background: #bcb8b4;
    border-color: #908c88;
    margin-right: 3px;
    color: #45423f;
}

.st-polar {
    width: 40px;
}

.st-osnap {
    width: 74px;
}

.st-track {
    width: 84px;
}

.coords {
    margin-left: 1px;
    white-space: nowrap;
}

/* open menu, lies over the toolbars and canvas */
.menu {
    position: absolute;
    left: 133px;
    top: 23px;
    width: 116px;
    padding: 0 0 2px;
    background: #dedad6;
    border: 1px solid #a8a4a0;
    box-shadow: 1px 1px 1px rgba(0, 0, 0, 0.25);
}

.menu-item {
    height: 11.300px;
    display: flex;
    align-items: center;
    gap: 1px;
    padding-left: 1px;
    white-space: nowrap;
    color: #55524f;
}

.menu-item i {
    width: 11px;
    flex: none;
}

.menu-sub b {
    margin-left: auto;
    padding-right: 2px;
    font-weight: normal;
    font-size: 6px;
    color: #333;
}

.menu-sep {
    height: 3.800px;
    position: relative;
}

.menu-sep::after {
    content: "";
    position: absolute;
    left: 2px;
    right: 2px;
    top: 1px;
    border-top: 1px solid #c8c4c0;
}

.cursor {
    position: absolute;
    left: 150px;
    top: 15px;
    width: 8px;
    height: 11px;
}
```
